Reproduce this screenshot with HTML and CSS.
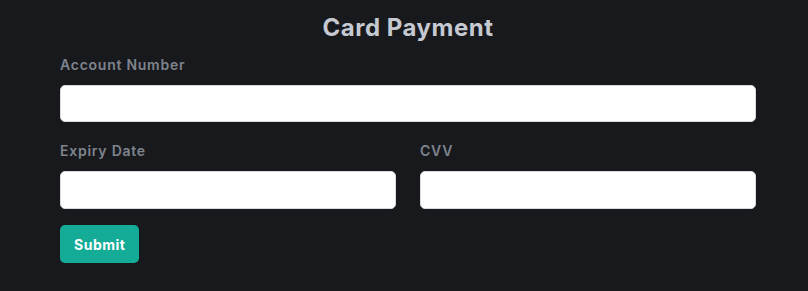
FILE: index.html
```html
<!DOCTYPE html>
<html lang="en">
<head>
<meta charset="utf-8">
<title>Card Payment</title>
<link rel="stylesheet" href="styles.css">
</head>
<body>
<form class="payment">
  <h1 class="title">Card Payment</h1>
  <div class="field field-first">
    <label class="label" for="acct">Account Number</label>
    <input class="input" id="acct" type="text">
  </div>
  <div class="row">
    <div class="field">
      <label class="label" for="exp">Expiry Date</label>
      <input class="input" id="exp" type="text">
    </div>
    <div class="field">
      <label class="label" for="cvv">CVV</label>
      <input class="input" id="cvv" type="text">
    </div>
  </div>
  <button class="submit" type="button">Submit</button>
</form>
</body>
</html>
```
FILE: styles.css
```css
html, body {
  margin: 0;
  padding: 0;
  background: #18191d;
  height: 100%;
}
body {
  font-family: Inter, "Noto Sans", sans-serif;
}
.payment {
  display: flex;
  flex-direction: column;
  padding: 13px 52px 0 60px;
}
.title {
  margin: 0 0 12px;
  font-size: 24px;
  line-height: 30px;
  font-weight: 700;
  color: #c5c9d1;
  text-align: center;
  letter-spacing: 0.5px;
}
.field {
  display: flex;
  flex-direction: column;
}
.field-first {
  margin-bottom: 19px;
}
.label {
  font-size: 14px;
  line-height: 20px;
  font-weight: 600;
  color: #7e848d;
  letter-spacing: 0.75px;
  margin-bottom: 10px;
}
.input {
  box-sizing: border-box;
  height: 38px;
  border: 1px solid #d9dbe0;
  border-radius: 5px;
  background: #ffffff;
  padding: 0 10px;
  font: inherit;
  outline: none;
}
.field-first .input {
  height: 37px;
}
.row {
  display: grid;
  grid-template-columns: 1fr 1fr;
  column-gap: 24px;
  margin-bottom: 16px;
}
.submit {
  align-self: flex-start;
  height: 38px;
  padding: 0 14px;
  border: none;
  border-radius: 5px;
  background: #14ac97;
  color: #ffffff;
  font-family: inherit;
  font-size: 14px;
  font-weight: 700;
  letter-spacing: 0.5px;
  cursor: pointer;
}
```
